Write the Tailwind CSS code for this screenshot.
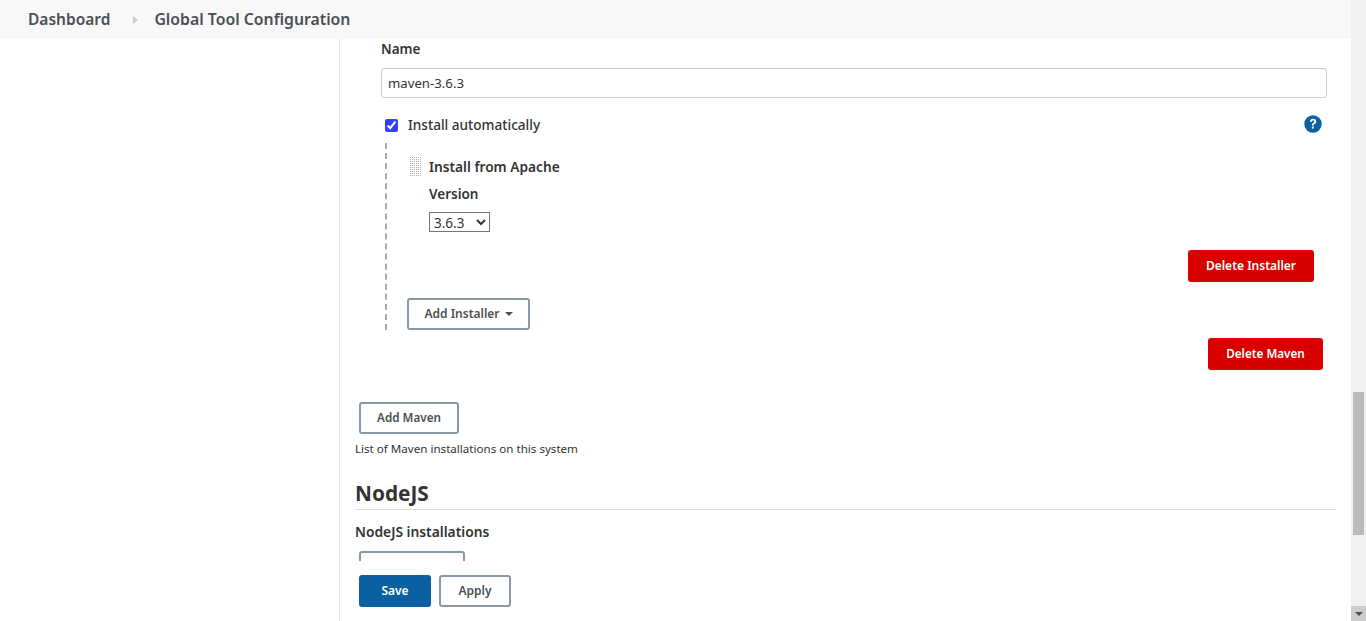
<!DOCTYPE html>
<html lang="en">
<head>
<meta charset="utf-8">
<title>Global Tool Configuration</title>
<script src="https://cdn.jsdelivr.net/npm/@tailwindcss/browser@4"></script>
</head>
<body class="m-0 bg-white overflow-hidden font-['Noto_Sans',sans-serif] text-[#333]">
<div class="flex h-[621px] w-[1366px] overflow-hidden">
  <div class="flex flex-col w-[1351px] h-full">
    <header class="h-[39px] shrink-0 bg-[#f8f8f8] flex items-center pl-[28px] text-[15.5px] font-semibold text-[#4a4f55]">
      <span>Dashboard</span>
      <svg class="ml-[23px] mr-[16px] w-[5px] h-[8px]" viewBox="0 0 5 8"><path d="M0 0l5 4-5 4z" fill="#ccc"/></svg>
      <span class="text-[15.8px]">Global Tool Configuration</span>
    </header>
    <div class="flex flex-1 min-h-0">
      <aside class="w-[340px] shrink-0 border-r border-[#e6e6e6]"></aside>
      <main class="flex-1 flex flex-col min-w-0">
        <div class="h-[522px] overflow-hidden pl-[15px] pr-[15px] shrink-0">
          <div class="pl-[26px] pr-[9px]">
            <div class="text-[13.5px] font-semibold leading-[20px] text-[#333]">Name</div>
            <input class="block mt-[9px] w-full h-[30px] border border-[#ccc] rounded-[3px] px-[6px] text-[13.2px] text-[#333] bg-white" value="maven-3.6.3">
            <div class="flex items-center mt-[17px] h-[20px] pl-[4px] pr-[5px]">
              <input type="checkbox" checked class="w-[13px] h-[13px] m-0 accent-[#3340ff]">
              <span class="ml-[10px] text-[13.6px] font-medium">Install automatically</span>
              <svg class="ml-auto mb-[2px] w-[18px] h-[18px]" viewBox="0 0 18 18"><circle cx="9" cy="9" r="8.700" fill="#0b60a1"/><path d="M5.800 6.800c.1-1.900 1.500-3.100 3.400-3.100 1.800 0 3.100 1.100 3.100 2.700 0 1.100-.5 1.800-1.500 2.400-.8.500-1 .8-1 1.700H7.900c0-1.400.3-2 1.200-2.600.8-.5 1.100-.9 1.100-1.400 0-.7-.4-1.100-1.100-1.100-.8 0-1.200.5-1.300 1.400zM7.900 11.500h1.900v2.100H7.900z" fill="#fff"/></svg>
            </div>
            <div class="mt-[8px] ml-[4px] h-[187px] border-l-2 border-dashed border-[#aaa] pl-[23px] flex flex-col">
              <div class="flex items-center h-[20px] mt-[14px]">
                <svg class="w-[12px] h-[20px] shrink-0" viewBox="0 0 12 20"><defs><pattern id="g" width="2" height="2" patternUnits="userSpaceOnUse"><rect width="1" height="1" fill="#b0b0b0"/></pattern></defs><rect width="12" height="20" fill="url(#g)"/></svg>
                <span class="ml-[7px] text-[13.7px] font-semibold text-[#333]">Install from Apache</span>
              </div>
              <div class="ml-[19px] mt-[7px] text-[13.5px] font-semibold leading-[20px]">Version</div>
              <select class="ml-[19px] mt-[8px] w-[61px] h-[20px] border border-[#767676] bg-white text-[13.5px] rounded-none"><option>3.6.3</option></select>
              <button class="self-end mr-[13px] mt-[18px] w-[126px] h-[32px] rounded-[3px] bg-[#d90000] text-white text-[12px] font-semibold">Delete Installer</button>
              <button class="self-start mt-[16px] -ml-[3px] w-[123px] h-[32px] rounded-[3px] border-2 border-[#8a97a5] bg-white text-[#4a4f55] text-[12px] font-semibold flex items-center justify-center gap-[5px]">Add Installer<svg class="w-[8px] h-[4px]" viewBox="0 0 8 4"><path d="M0 0h8L4 4z" fill="#4a4f55"/></svg></button>
            </div>
            <div class="flex justify-end pr-[4px]">
              <button class="mt-[8px] w-[115px] h-[32px] rounded-[3px] bg-[#d90000] text-white text-[11.7px] font-semibold">Delete Maven</button>
            </div>
          </div>
          <button class="block mt-[32px] ml-[4px] w-[100px] h-[32px] rounded-[3px] border-2 border-[#8a97a5] bg-white text-[#4a4f55] text-[11.7px] font-semibold">Add Maven</button>
          <div class="mt-[6px] text-[11.6px] leading-[18px] text-[#333]">List of Maven installations on this system</div>
          <div class="mt-[21px] pb-[2px] border-b border-[#ddd] text-[20.8px] font-bold leading-[28px] text-[#333]">NodeJS</div>
          <div class="mt-[12px] text-[13.8px] font-semibold leading-[20px]">NodeJS installations</div>
          <button class="block mt-[9px] ml-[4px] w-[106px] h-[32px] rounded-[3px] border-2 border-[#8a97a5] bg-white"></button>
        </div>
        <div class="flex-1 flex items-start pl-[19px] pt-[14px] gap-[8px]">
          <button class="w-[72px] h-[32px] rounded-[3px] bg-[#0b60a1] text-white text-[12px] font-semibold">Save</button>
          <button class="w-[72px] h-[32px] rounded-[3px] border-2 border-[#8a97a5] bg-white text-[#4a4f55] text-[12px] font-semibold">Apply</button>
        </div>
      </main>
    </div>
  </div>
  <div class="w-[15px] h-full bg-[#f0f0f0] flex flex-col items-center">
    <div class="mt-[392px] w-[11px] h-[143px] bg-[#bababa]"></div>
    <div class="mt-auto w-[15px] h-[15px] bg-[#cdcdcd] flex items-center justify-center"><svg class="w-[8px] h-[4px]" viewBox="0 0 8 4"><path d="M0 0h8L4 4z" fill="#505050"/></svg></div>
  </div>
</div>
</body>
</html>
